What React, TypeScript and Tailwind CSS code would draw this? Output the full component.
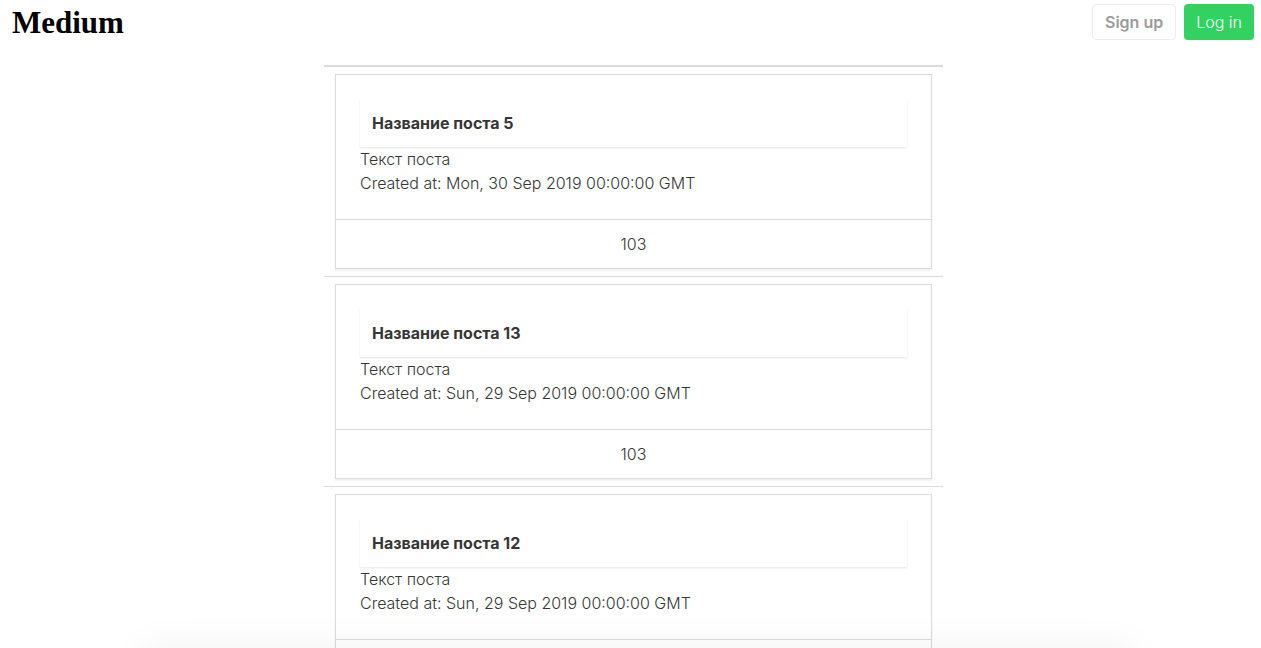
type Post = {
  id: number;
  title: string;
  text: string;
  createdAt: string;
  likes: number;
};

const posts: Post[] = [
  { id: 5, title: "Название поста 5", text: "Текст поста", createdAt: "Mon, 30 Sep 2019 00:00:00 GMT", likes: 103 },
  { id: 13, title: "Название поста 13", text: "Текст поста", createdAt: "Sun, 29 Sep 2019 00:00:00 GMT", likes: 103 },
  { id: 12, title: "Название поста 12", text: "Текст поста", createdAt: "Sun, 29 Sep 2019 00:00:00 GMT", likes: 103 },
];

function Header() {
  return (
    <header className="flex items-start justify-between pt-1 pr-[7px] pl-3">
      <a
        href="#"
        className="font-['Liberation_Serif',serif] text-[31px] leading-[38px] font-bold text-black"
      >
        Medium
      </a>
      <div className="flex gap-2">
        <button
          type="button"
          className="h-9 rounded border border-[#ededed] bg-white px-3 font-semibold text-[#9b9b9b]"
        >
          Sign up
        </button>
        <button
          type="button"
          className="h-9 rounded bg-[#33d160] px-3 font-light text-white"
        >
          Log in
        </button>
      </div>
    </header>
  );
}

function PostCard({ post }: { post: Post }) {
  return (
    <article className="border border-[#dbdbdb] bg-white shadow-[0_2px_2px_rgba(10,10,10,0.06)]">
      <div className="p-6">
        <h2 className="px-3 leading-[48px] font-bold text-[#363636] shadow-[0_1px_2px_rgba(10,10,10,0.1)]">
          {post.title}
        </h2>
        <p>{post.text}</p>
        <p>Created at: {post.createdAt}</p>
      </div>
      <footer className="border-t border-[#dbdbdb] py-3 text-center">{post.likes}</footer>
    </article>
  );
}

export default function App() {
  return (
    <div className="bg-white font-['Inter',sans-serif] text-base leading-6 font-light text-[#363636]">
      <Header />
      <main className="pt-[23px] pl-1.5">
        <ul className="mx-auto max-w-[619px] border-t border-[#dbdbdb]">
          {posts.map((post) => (
            <li key={post.id} className="border-t border-[#dbdbdb] px-[11px] py-[7px]">
              <PostCard post={post} />
            </li>
          ))}
        </ul>
      </main>
      <div className="pointer-events-none fixed top-full right-32 left-36 h-20 shadow-[0_0_40px_rgba(0,0,0,0.06)]" />
    </div>
  );
}
